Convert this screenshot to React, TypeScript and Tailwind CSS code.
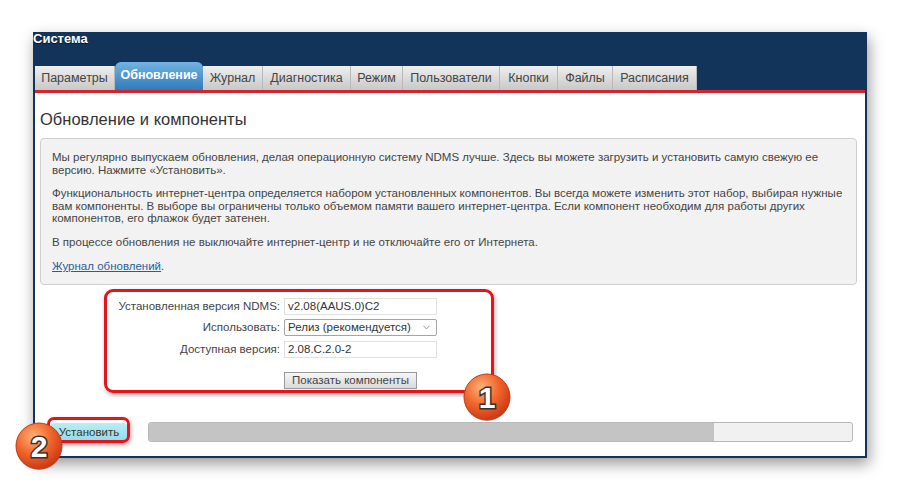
import { ChevronDown } from "lucide-react";

const tabs = [
  { label: "Параметры", w: "w-[80px]" },
  { label: "Обновление", w: "w-[88px]", active: true },
  { label: "Журнал", w: "w-[60px]" },
  { label: "Диагностика", w: "w-[88px]" },
  { label: "Режим", w: "w-[52px]" },
  { label: "Пользователи", w: "w-[97px]" },
  { label: "Кнопки", w: "w-[58px]" },
  { label: "Файлы", w: "w-[55px]" },
  { label: "Расписания", w: "w-[84px]" },
];

// orange numbered marker drawn over the screenshot
function Badge({ n, className }: { n: string; className: string }) {
  return (
    <svg width="52" height="52" viewBox="0 0 52 52" className={className}>
      <defs>
        <radialGradient id={`bg${n}`} cx="38%" cy="30%" r="70%">
          <stop offset="0%" stopColor="#fdb27a" />
          <stop offset="55%" stopColor="#f0652b" />
          <stop offset="100%" stopColor="#cf3a16" />
        </radialGradient>
      </defs>
      <circle cx="26" cy="27" r="23" fill="rgba(0,0,0,0.25)" />
      <circle cx="26" cy="26" r="23" fill={`url(#bg${n})`} stroke="#c23a17" strokeWidth="1" />
      <text
        x="26"
        y="37"
        textAnchor="middle"
        fontFamily="'Liberation Sans', Arial, sans-serif"
        fontWeight="bold"
        fontSize="30"
        fill="#ffffff"
        stroke="#333333"
        strokeWidth="3"
        paintOrder="stroke"
      >
        {n}
      </text>
    </svg>
  );
}

export default function App() {
  return (
    <div className="relative w-[900px] h-[491px] bg-white overflow-hidden font-['Liberation_Sans',Arial,sans-serif]">
      <div className="pt-[32px] pl-[33px]">
        {/* Router window */}
        <div className="w-[834px] bg-[#12335a] pb-[2px] shadow-[2px_6px_14px_rgba(0,0,0,0.4)]">
          <div className="h-[30px] text-white font-bold text-[13px] leading-[14px] [text-shadow:0_1px_1px_rgba(0,0,0,0.6)]">
            Система
          </div>

          {/* Tabs */}
          <div className="flex items-end h-[28px] px-[2px]">
            {tabs.map((t) =>
              t.active ? (
                <div
                  key={t.label}
                  className={`${t.w} h-[28px] rounded-t-[6px] bg-gradient-to-b from-[#72b4e2] to-[#2f7bbb] text-white font-bold text-[12.5px] flex items-center justify-center pb-[2px]`}
                >
                  {t.label}
                </div>
              ) : (
                <div
                  key={t.label}
                  className={`${t.w} h-[24px] bg-gradient-to-b from-[#efefef] to-[#c8c8c8] border-r border-[#b9b9b9] text-[#444] text-[12.5px] flex items-center justify-center`}
                >
                  {t.label}
                </div>
              )
            )}
          </div>

          {/* Content */}
          <div className="mx-[2px] h-[366px] bg-white">
            <div className="h-[3px] bg-[#d3262c]" />

            <h1 className="pt-[17px] pl-[5px] text-[16.5px] leading-[18px] text-[#333]">Обновление и компоненты</h1>

            <div className="mt-[10px] ml-[5px] mr-[8px] h-[147px] bg-[#f2f2f2] border border-[#cfcfcf] rounded-[4px] pt-[12px] pl-[11px] pr-[8px] text-[11.5px] leading-[12.5px] text-[#444]">
              <p className="mb-[11px]">
                Мы регулярно выпускаем обновления, делая операционную систему NDMS лучше. Здесь вы можете загрузить и установить самую свежую ее
                <br />
                версию. Нажмите «Установить».
              </p>
              <p className="mb-[11px]">
                Функциональность интернет-центра определяется набором установленных компонентов. Вы всегда можете изменить этот набор, выбирая нужные
                <br />
                вам компоненты. В выборе вы ограничены только объемом памяти вашего интернет-центра. Если компонент необходим для работы других
                <br />
                компонентов, его флажок будет затенен.
              </p>
              <p className="mb-[12px]">В процессе обновления не выключайте интернет-центр и не отключайте его от Интернета.</p>
              <p>
                <span className="text-[#1f5f9e] underline">Журнал обновлений</span>.
              </p>
            </div>

            {/* Version form */}
            <div className="mt-[13px] flex flex-col gap-[4px] text-[11.5px] text-[#444]">
              <div className="flex items-center h-[17px]">
                <span className="w-[249px] text-right pr-[4px]">Установленная версия NDMS:</span>
                <div className="w-[153px] h-[17px] border border-[#e0e0e0] px-[3px] flex items-center text-[#333]">v2.08(AAUS.0)C2</div>
              </div>
              <div className="flex items-center h-[17px]">
                <span className="w-[249px] text-right pr-[4px]">Использовать:</span>
                <div className="w-[153px] h-[17px] border border-[#a4a4a4] rounded-[2px] px-[3px] flex items-center justify-between text-[#333]">
                  Релиз (рекомендуется)
                  <ChevronDown size={11} strokeWidth={1.5} className="text-[#666] mr-[1px]" />
                </div>
              </div>
              <div className="flex items-center h-[17px] mt-[1px]">
                <span className="w-[249px] text-right pr-[4px]">Доступная версия:</span>
                <div className="w-[153px] h-[17px] border border-[#e0e0e0] px-[3px] flex items-center text-[#333]">2.08.C.2.0-2</div>
              </div>
              <div className="flex mt-[10px] pl-[249px]">
                <button className="w-[133px] h-[17px] border border-[#9a9a9a] bg-gradient-to-b from-[#f6f6f6] to-[#dadada] text-[11.5px] leading-[15px] text-[#444]">
                  Показать компоненты
                </button>
              </div>
            </div>

            {/* Install + progress */}
            <div className="mt-[33px] flex items-center pl-[16px]">
              <button className="w-[76px] h-[19px] rounded-[3px] bg-gradient-to-b from-[#b9eef4] to-[#8fdbe6] text-[11.5px] leading-[17px] text-[#333]">
                Установить
              </button>
              <div className="ml-[21px] w-[705px] h-[20px] border border-[#b8b8b8] rounded-[3px] bg-[#f1f1f1] overflow-hidden">
                <div className="h-full bg-[#c4c4c4]" style={{ width: "80.4%" }} />
              </div>
            </div>
          </div>
        </div>
      </div>

      {/* Annotations */}
      <div className="absolute left-[104px] top-[289px] w-[390px] h-[104px] border-[3px] border-[#e3141c] rounded-[9px] shadow-[1px_2px_4px_rgba(0,0,0,0.35)]" />
      <div className="absolute left-[47px] top-[417px] w-[83px] h-[26px] border-[3px] border-[#e3141c] rounded-[7px] shadow-[1px_2px_4px_rgba(0,0,0,0.35)]" />
      <Badge n="1" className="absolute left-[461px] top-[371px]" />
      <Badge n="2" className="absolute left-[13px] top-[420px]" />
    </div>
  );
}
